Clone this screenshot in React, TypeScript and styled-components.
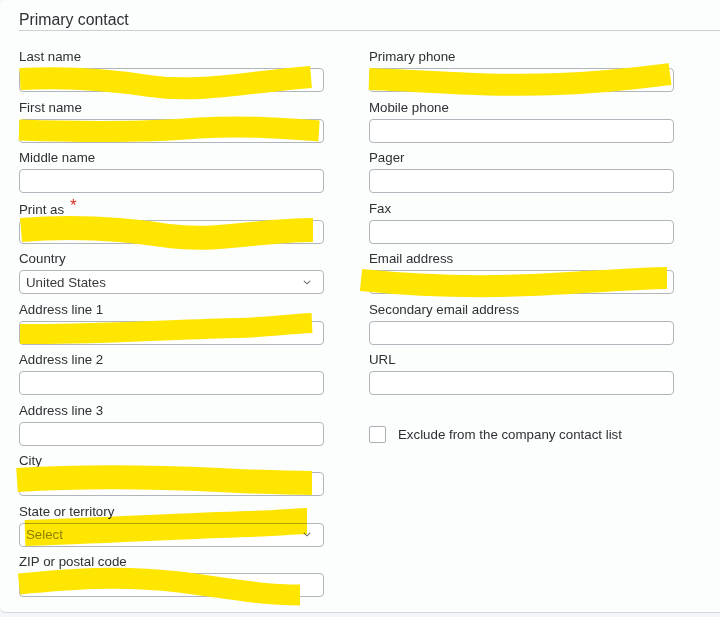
import React from "react"
import styled, { createGlobalStyle } from "styled-components"

const GlobalStyle = createGlobalStyle`
    html, body {
        margin: 0;
        padding: 0;
        background: #f4f5f8;
        overflow: hidden;
    }
    body {
        font-family: "Liberation Sans", Arial, sans-serif;
        color: #393a3d;
    }
`

const Card = styled.section`
    width: 740px;
    height: 613px;
    padding: 10px 0 0 19px;
    background: #fcfdfd;
    border-bottom: 1px solid #d3dbe1;
    border-radius: 6px;
    box-sizing: border-box;
`

const Title = styled.h2`
    margin: 0;
    font-size: 15.8px;
    font-weight: 400;
    line-height: 20px;
    color: #2f3034;
    border-bottom: 1px solid #c9d0d6;
`

const Columns = styled.div`
    display: grid;
    grid-template-columns: 305px 305px;
    column-gap: 45px;
    margin-top: 17px;
    align-items: start;
`

const Column = styled.div`
    display: flex;
    flex-direction: column;
    gap: 6.5px;
`

const FieldBox = styled.div`
    display: flex;
    flex-direction: column;
    gap: 4px;
`

const Label = styled.label`
    font-size: 13.3px;
    line-height: 17px;
    height: 16px;
    color: #2f3034;
    white-space: nowrap;
`

const Required = styled.span`
    color: #d52b1e;
    font-size: 17px;
    position: relative;
    top: -3px;
    margin-left: 6px;
`

const InputWrap = styled.div`
    position: relative;
    height: 24px;
`

const Box = styled.div<{ $muted?: boolean }>`
    height: 24px;
    box-sizing: border-box;
    border: 1px solid #b0b6bc;
    border-radius: 4px;
    background: #fff;
    display: flex;
    align-items: center;
    justify-content: space-between;
    padding: 0 12px 0 6px;
    font-size: 13.3px;
    color: ${(p) => (p.$muted ? "#8d9096" : "#393a3d")};
`

const Chevron = () => (
    <svg width="8" height="5" viewBox="0 0 8 5">
        <path d="M0.8 0.8 L4 3.8 L7.2 0.8" fill="none" stroke="#6b6c72" strokeWidth="1.1" />
    </svg>
)

const Mark = styled.svg<{ $blend?: boolean }>`
    position: absolute;
    left: 0;
    top: 0;
    width: 305px;
    height: 24px;
    overflow: visible;
    pointer-events: none;
    mix-blend-mode: ${(p) => (p.$blend ? "multiply" : "normal")};
`

const Highlight = ({ d, w = 22, blend }: { d: string; w?: number; blend?: boolean }) => (
    <Mark $blend={blend} viewBox="0 0 305 24">
        <path d={d} fill="none" stroke="#ffe600" strokeWidth={w} strokeLinejoin="round" strokeLinecap="butt" />
    </Mark>
)

type FieldProps = {
    label: string
    required?: boolean
    value?: string
    placeholder?: string
    select?: boolean
    mark?: string
    markWidth?: number
    blend?: boolean
}

const Field = ({ label, required, value, placeholder, select, mark, markWidth, blend }: FieldProps) => (
    <FieldBox>
        <Label>
            {label}
            {required && <Required>*</Required>}
        </Label>
        <InputWrap>
            <Box $muted={!value && !!placeholder}>
                <span>{value || placeholder || ""}</span>
                {select && <Chevron />}
            </Box>
            {mark && <Highlight d={mark} w={markWidth} blend={blend} />}
        </InputWrap>
    </FieldBox>
)

const CheckRow = styled.div`
    display: flex;
    align-items: center;
    gap: 12px;
    padding-top: 24px;
    font-size: 13.3px;
    color: #2f3034;
`

const CheckBox = styled.span`
    width: 17px;
    height: 17px;
    box-sizing: border-box;
    border: 1px solid #aab0b6;
    border-radius: 2px;
    background: #fff;
`

const App = () => {
    return (
        <>
            <GlobalStyle />
            <Card>
                <Title>Primary contact</Title>
                <Columns>
                    <Column>
                        <Field
                            label="Last name"
                            mark="M1 11 C 40 9, 80 10, 130 18 C 180 25, 220 15, 292 9"
                            markWidth={22}
                        />
                        <Field
                            label="First name"
                            mark="M0 11 C 60 13, 120 14, 180 9 C 230 6, 270 10, 300 12"
                            markWidth={21}
                        />
                        <Field label="Middle name" />
                        <Field
                            label="Print as"
                            required
                            mark="M2 10 C 50 6, 100 8, 150 16 C 200 22, 240 10, 294 10"
                            markWidth={24}
                        />
                        <Field label="Country" value="United States" select />
                        <Field
                            label="Address line 1"
                            mark="M1 13 C 80 14, 160 8, 220 7 C 250 6, 270 3, 293 2"
                            markWidth={20}
                        />
                        <Field label="Address line 2" />
                        <Field label="Address line 3" />
                        <Field
                            label="City"
                            mark="M-2 8 C 60 4, 140 5, 200 8 C 240 10, 270 11, 293 11"
                            markWidth={24}
                        />
                        <Field
                            label="State or territory"
                            placeholder="Select"
                            select
                            blend
                            mark="M6 10 C 80 8, 160 3, 230 1 C 260 0, 280 -2, 288 -2"
                            markWidth={26}
                        />
                        <Field
                            label="ZIP or postal code"
                            mark="M0 11 C 50 6, 100 2, 160 9 C 200 14, 240 22, 281 22"
                            markWidth={21}
                        />
                    </Column>
                    <Column>
                        <Field
                            label="Primary phone"
                            mark="M0 11 C 60 13, 120 19, 190 16 C 240 14, 270 10, 301 6"
                            markWidth={22}
                        />
                        <Field label="Mobile phone" />
                        <Field label="Pager" />
                        <Field label="Fax" />
                        <Field
                            label="Email address"
                            mark="M-8 10 C 60 17, 130 18, 200 13 C 250 10, 280 8, 298 8"
                            markWidth={22}
                        />
                        <Field label="Secondary email address" />
                        <Field label="URL" />
                        <CheckRow>
                            <CheckBox />
                            <span>Exclude from the company contact list</span>
                        </CheckRow>
                    </Column>
                </Columns>
            </Card>
        </>
    )
}

export default App
